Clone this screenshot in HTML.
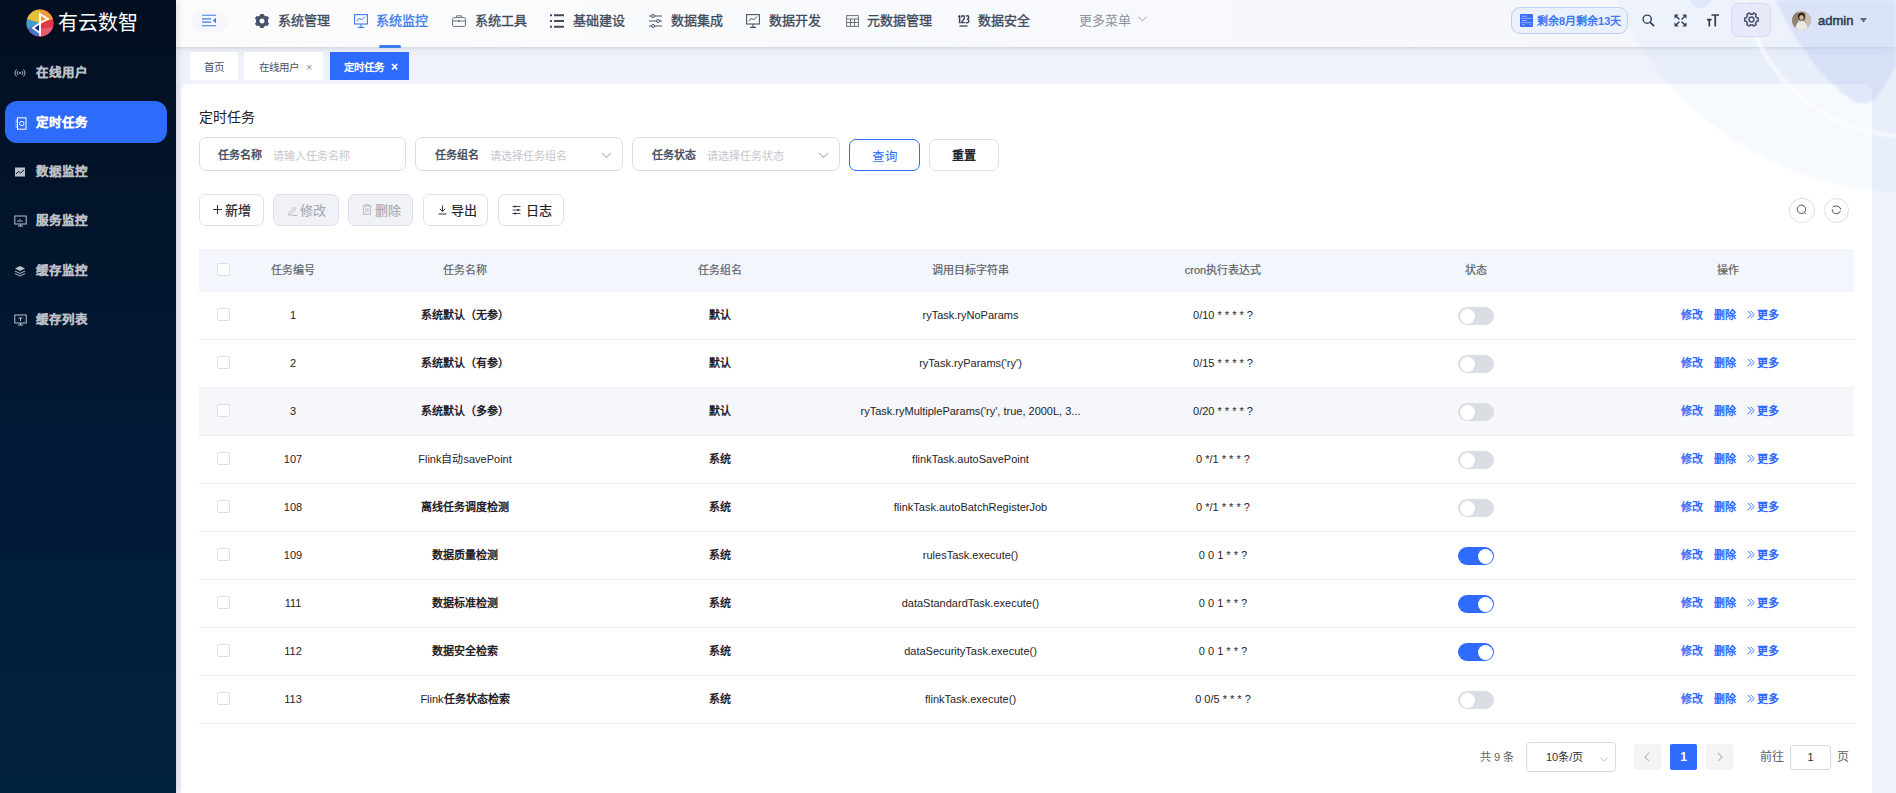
<!DOCTYPE html>
<html lang="zh-CN">
<head>
<meta charset="utf-8">
<style>
*{box-sizing:border-box;margin:0;padding:0}
html,body{width:1896px;height:793px;overflow:hidden}
body{font-family:"Liberation Sans",sans-serif;background:#eff2fa;position:relative;color:#303133}
.a{position:absolute;white-space:nowrap}
svg{display:block}
/* sidebar */
#side{position:absolute;left:0;top:0;width:176px;height:793px;z-index:5;box-shadow:2px 0 6px rgba(0,21,41,.12);background:linear-gradient(180deg,#020f22 0%,#021a35 55%,#02213f 100%)}
#logo{position:absolute;left:0;top:0;width:176px;height:47px;background:#020f20}
.mi{position:absolute;left:0;width:176px;height:42px;font-size:12.5px;font-weight:bold;color:#bcc0c7}
.mi .t{position:absolute;left:36px;top:13px;line-height:18px;-webkit-text-stroke:0.2px currentColor}
.mi .ic{position:absolute;left:14px;top:16px}
.mi.act{left:5px;width:162px;background:#2d6bfb;border-radius:12px;color:#fff}
.mi.act .t{left:31px}
.mi.act .ic{left:10px}
/* header */
#hdr{position:absolute;left:176px;top:0;width:1720px;height:47px;background:linear-gradient(90deg,#fcfcfd 0%,#f8f9fc 50%,#f3f6fb 100%);box-shadow:0 1px 2px rgba(0,20,60,.08),0 3px 9px rgba(0,20,60,.07)}
.nav{position:absolute;top:0;height:47px;font-size:13px;font-weight:bold;color:#3f4a5c}
.nav .t{position:absolute;top:12px;line-height:18px}
.nv{top:12px;font-size:13px;line-height:18px;color:#3f4a5c;-webkit-text-stroke:0.35px currentColor}
.nm{font-weight:bold}
/* tags */
.tag{position:absolute;top:52px;height:28px;background:#fff;font-size:10.5px;color:#4a5160;line-height:28px;padding-top:1px}
/* card */
#card{position:absolute;left:181px;top:84px;width:1691px;height:760px;background:#fff;border-radius:8px}
.inp{position:absolute;top:137px;height:34px;border:1px solid #d9dde9;border-radius:7px;background:#fff}
.inp .l{position:absolute;top:9px;font-size:11px;font-weight:bold;color:#4b5264;line-height:16px}
.inp .p{position:absolute;top:10px;font-size:11px;color:#c3c6cd;line-height:16px}
.btn{position:absolute;height:32px;border:1px solid #dde0ea;border-radius:7px;background:#fff;font-size:12px;color:#1f2329;text-align:center;line-height:30px}
.dis{background:#f0f2f7;color:#a9acb3}
.bt{top:202px;font-size:13px;line-height:18px;color:#1f2329;-webkit-text-stroke:0.2px currentColor}
/* table */
.th{position:absolute;top:249px;left:199px;width:1655px;height:43px;background:#f3f6fc}
.row{position:absolute;left:199px;width:1655px;height:48px;border-bottom:1px solid #eeeff3}
.c{position:absolute;top:0;height:47px;line-height:47px;font-size:11px;color:#1f2329;text-align:center;white-space:nowrap}
.hc{position:absolute;top:0;height:42px;line-height:42px;font-size:11px;color:#5f6368;-webkit-text-stroke:0.2px currentColor;text-align:center;white-space:nowrap}
.cb{position:absolute;width:13px;height:13px;border:1px solid #dcdfe6;border-radius:2px;background:#fff}
.sw{position:absolute;left:1259px;top:15px;width:36px;height:18px;border-radius:9px;background:#dadde4}
.sw::after{content:"";position:absolute;left:1.5px;top:1.5px;width:15px;height:15px;border-radius:50%;background:#fff}
.sw.on{background:#2f6bff}
.sw.on::after{left:19.5px}
.op{position:absolute;top:0;line-height:47px;font-size:11px;font-weight:bold;color:#2f6bff}
</style>
</head>
<body>
<!-- SIDEBAR -->
<div id="side">
  <div id="logo">
    <svg class="a" style="left:26px;top:9px" width="28" height="28" viewBox="0 0 28 28">
      <defs><clipPath id="lc"><circle cx="14" cy="14" r="13.5"/></clipPath></defs>
      <g clip-path="url(#lc)">
        <rect x="0" y="0" width="28" height="28" fill="#e23b45"/>
        <polygon points="0,0 14,0 14,14 0,10" fill="#e3c23a"/>
        <polygon points="14,0 28,0 28,10 14,14" fill="#f09a3a"/>
        <polygon points="0,10 14,14 0,20" fill="#3c9fd0"/>
        <polygon points="0,20 14,14 14,28 0,28" fill="#4a72c8"/>
        <polygon points="14,14 28,10 28,28 14,28" fill="#e0384a"/>
        <polygon points="14,20 28,18 28,28 14,28" fill="#e85a70"/>
      </g>
      <polygon points="14,5 22,10 14,14" fill="none" stroke="#fff" stroke-width="1.8"/>
      <polygon points="14,14 7,19 14,24" fill="#1a2a8a" stroke="#fff" stroke-width="1.8"/>
      <line x1="14" y1="4" x2="14" y2="27" stroke="#fff" stroke-width="1.6"/>
    </svg>
    <div class="a" style="left:58px;top:9px;font-size:20px;line-height:28px;color:#fff;font-weight:300;letter-spacing:0px">有云数智</div>
  </div>
  <div class="mi" style="top:51px">
    <svg class="ic" width="12" height="12" viewBox="0 0 12 12"><path d="M2.5 2.5a5 5 0 0 0 0 7M9.5 2.5a5 5 0 0 1 0 7M4 4a3 3 0 0 0 0 4M8 4a3 3 0 0 1 0 4" fill="none" stroke="#bcc0c7" stroke-width="0.9"/><circle cx="6" cy="6" r="1" fill="#bcc0c7"/></svg>
    <span class="t">在线用户</span></div>
  <div class="mi act" style="top:101px">
    <svg class="ic" width="12" height="13" viewBox="0 0 12 13"><rect x="2.5" y="0.8" width="8.5" height="11.4" fill="none" stroke="#fff" stroke-width="1"/><circle cx="6.8" cy="6.5" r="2.2" fill="none" stroke="#fff" stroke-width="1"/><path d="M0.5 3h2M0.5 5h2M0.5 8h2M0.5 10h2" stroke="#fff" stroke-width="0.8"/></svg>
    <span class="t">定时任务</span></div>
  <div class="mi" style="top:150px">
    <svg class="ic" width="12" height="12" viewBox="0 0 12 12"><rect x="1" y="1.5" width="10" height="9" fill="#bcc0c7"/><path d="M2 8l2.5-2.5 2 1.5L10 4" fill="none" stroke="#031428" stroke-width="1"/></svg>
    <span class="t">数据监控</span></div>
  <div class="mi" style="top:199px">
    <svg class="ic" width="13" height="12" viewBox="0 0 13 12"><rect x="0.8" y="1" width="11.4" height="8" fill="none" stroke="#bcc0c7" stroke-width="1"/><path d="M4 11h5M6.5 9v2M4 7V5M6 7V4M8 7V5.5" stroke="#bcc0c7" stroke-width="1"/></svg>
    <span class="t">服务监控</span></div>
  <div class="mi" style="top:249px">
    <svg class="ic" width="12" height="12" viewBox="0 0 12 12"><path d="M6 1L11 3.5 6 6 1 3.5z" fill="#bcc0c7"/><path d="M1 6l5 2.5L11 6M1 8.5l5 2.5 5-2.5" fill="none" stroke="#bcc0c7" stroke-width="1"/></svg>
    <span class="t">缓存监控</span></div>
  <div class="mi" style="top:298px">
    <svg class="ic" width="13" height="12" viewBox="0 0 13 12"><rect x="0.8" y="1" width="11.4" height="8" fill="none" stroke="#bcc0c7" stroke-width="1"/><path d="M4 11h5M6.5 9v2M4.5 4h4M6.5 4v3" stroke="#bcc0c7" stroke-width="1"/></svg>
    <span class="t">缓存列表</span></div>
</div>

<!-- HEADER -->
<div id="hdr"></div>
<svg id="deco" class="a" style="left:0;top:0;z-index:4" width="1896" height="793" viewBox="0 0 1896 793">
  <defs><filter id="bl" x="-10%" y="-10%" width="120%" height="120%"><feGaussianBlur stdDeviation="1.2"/></filter></defs>
  <circle cx="1908" cy="-126" r="318" fill="rgba(200,215,248,.16)" filter="url(#bl)"/>
  <path d="M1738 65 C1760 80 1785 100 1800 108 L1896 160 L1896 0 L1738 0Z" fill="rgba(190,205,245,.0)"/>
  <path d="M1776 0 C1792 38 1822 80 1852 100 Q1866 108 1876 98 C1884 88 1892 74 1896 64 L1896 0Z" fill="rgba(165,185,240,.26)" filter="url(#bl)"/>
  <circle cx="1908" cy="-30" r="166" fill="none" stroke="rgba(255,255,255,.6)" stroke-width="4" filter="url(#bl)"/>
  <circle cx="1701" cy="-3" r="11" fill="rgba(190,210,245,.30)"/>
</svg>
<!-- hamburger -->
<div class="a" style="left:191px;top:10px;width:37px;height:22px;border-radius:11px;background:#f6f7fb"></div>
<svg class="a" style="left:202px;top:14px" width="14" height="13" viewBox="0 0 14 13"><path d="M0 1.2h14M0 11.8h14M0 4.9h9M0 8.1h9" stroke="#3b7cf0" stroke-width="1.1"/><path d="M14 3.8L10.8 6.5 14 9.2z" fill="#3b7cf0"/></svg>
<!-- gear -->
<svg class="a" style="left:255px;top:14px" width="14" height="14" viewBox="0 0 14 14"><path d="M4.20 2.15 L5.46 1.62 L5.78 0.11 L8.22 0.11 L8.54 1.62 L9.80 2.15 L10.89 2.97 L12.36 2.50 L13.58 4.61 L12.43 5.65 L12.60 7.00 L12.43 8.35 L13.58 9.39 L12.36 11.50 L10.89 11.03 L9.80 11.85 L8.54 12.38 L8.22 13.89 L5.78 13.89 L5.46 12.38 L4.20 11.85 L3.11 11.03 L1.64 11.50 L0.42 9.39 L1.57 8.35 L1.40 7.00 L1.57 5.65 L0.42 4.61 L1.64 2.50 L3.11 2.97Z" fill="#46536a" stroke="#46536a" stroke-width="1" stroke-linejoin="round"/><circle cx="7" cy="7" r="2.5" fill="#fbfbfd"/></svg>
<span class="a nv" style="left:278px">系统管理</span>
<!-- monitor active -->
<svg class="a" style="left:354px;top:14px" width="14" height="14" viewBox="0 0 14 14"><rect x="0.6" y="0.6" width="12.8" height="9.4" fill="none" stroke="#3b7cf0" stroke-width="1.1"/><path d="M3 7l2.5-3 2 2L11 2.5" fill="none" stroke="#3b7cf0" stroke-width="1"/><path d="M7 10v3M4 13.4h6" stroke="#3b7cf0" stroke-width="1.1"/></svg>
<span class="a nv" style="left:376px;color:#3b7cf0">系统监控</span>
<div class="a" style="left:379px;top:45px;width:22px;height:2.5px;border-radius:2px;background:#3b7cf0"></div>
<!-- briefcase -->
<svg class="a" style="left:452px;top:15px" width="14" height="12" viewBox="0 0 14 12"><rect x="0.6" y="2.6" width="12.8" height="8.8" rx="1" fill="none" stroke="#6b7484" stroke-width="1"/><path d="M4.5 2.6V0.8h5v1.8M0.6 6h12.8" fill="none" stroke="#6b7484" stroke-width="1"/><rect x="6" y="5.2" width="2" height="1.8" fill="#6b7484"/></svg>
<span class="a nv" style="left:475px">系统工具</span>
<!-- list -->
<svg class="a" style="left:550px;top:14px" width="14" height="14" viewBox="0 0 14 14"><path d="M0 1.2h2M0 7h2M0 12.8h2M4 1.2h10M4 7h10M4 12.8h10" stroke="#3f4a5c" stroke-width="2"/></svg>
<span class="a nv" style="left:573px">基础建设</span>
<!-- sliders -->
<svg class="a" style="left:649px;top:14px" width="13" height="14" viewBox="0 0 13 14"><path d="M0 2h13M0 7h13M0 12h13" stroke="#46536a" stroke-width="1"/><circle cx="4" cy="2" r="1.5" fill="#f8f9fc" stroke="#46536a" stroke-width="1"/><circle cx="9" cy="7" r="1.5" fill="#f8f9fc" stroke="#46536a" stroke-width="1"/><circle cx="4" cy="12" r="1.5" fill="#f8f9fc" stroke="#46536a" stroke-width="1"/></svg>
<span class="a nv" style="left:671px">数据集成</span>
<!-- monitor 2 -->
<svg class="a" style="left:746px;top:14px" width="14" height="14" viewBox="0 0 14 14"><rect x="0.6" y="0.6" width="12.8" height="9.4" fill="none" stroke="#46536a" stroke-width="1.1"/><path d="M3 7l2.5-3 2 2L11 2.5" fill="none" stroke="#46536a" stroke-width="1"/><path d="M7 10v3M4 13.4h6" stroke="#46536a" stroke-width="1.1"/></svg>
<span class="a nv" style="left:769px">数据开发</span>
<!-- table -->
<svg class="a" style="left:846px;top:15px" width="13" height="12" viewBox="0 0 13 12"><rect x="0.6" y="0.6" width="11.8" height="10.8" fill="none" stroke="#6b7484" stroke-width="1"/><path d="M0.6 4h11.8M0.6 7.5h11.8M4.5 4v7.4M8.5 4v7.4" stroke="#6b7484" stroke-width="1"/></svg>
<span class="a nv" style="left:867px">元数据管理</span>
<!-- 123 -->
<svg class="a" style="left:957px;top:15px" width="13" height="13" viewBox="0 0 13 13"><path d="M1.2 1.8L2.6 0.9V8.2" fill="none" stroke="#3a4558" stroke-width="1.5"/><path d="M4.3 2.3Q4.6 0.8 6 0.8Q7.5 0.8 7.5 2.4Q7.5 3.6 4.3 7.6H7.8" fill="none" stroke="#3a4558" stroke-width="1.4"/><path d="M8.8 1.2Q9.4 0.8 10.4 0.8Q11.8 0.8 11.8 2.3Q11.8 4 10 4.2Q11.9 4.4 11.9 6.1Q11.9 7.8 10.2 7.8Q9.2 7.8 8.7 7.2" fill="none" stroke="#3a4558" stroke-width="1.4"/><path d="M2.5 11h8" stroke="#3a4558" stroke-width="1.3"/></svg>
<span class="a nv" style="left:978px">数据安全</span>
<span class="a nv" style="left:1079px;color:#8e9299;-webkit-text-stroke:0">更多菜单</span>
<svg class="a" style="left:1138px;top:16px" width="9" height="6" viewBox="0 0 9 6"><path d="M0.5 0.8l4 4 4-4" fill="none" stroke="#9aa0a8" stroke-width="1"/></svg>

<div class="a" style="left:0;top:0;width:0;height:0;z-index:6">
<!-- right header -->
<div class="a" style="left:1511px;top:7px;width:117px;height:27px;border:1px solid #b8d0fa;border-radius:9px;background:#eaf1fd"></div>
<svg class="a" style="left:1520px;top:14px" width="13" height="13" viewBox="0 0 13 13"><rect x="0" y="0" width="13" height="13" rx="1" fill="#3b6cf5"/><path d="M1 4.3h11M1 8.6h11" stroke="#9db8fb" stroke-width="0.8"/><path d="M2 2.2h5M2 6.5h5M2 10.8h3M9.5 10.8h2" stroke="#b8ccfc" stroke-width="0.8"/></svg>
<span class="a" style="left:1537px;top:12px;font-size:11px;line-height:18px;font-weight:bold;color:#3b78f2">剩余8月剩余13天</span>
<svg class="a" style="left:1642px;top:14px" width="13" height="13" viewBox="0 0 13 13"><circle cx="5.2" cy="5.2" r="4.1" fill="none" stroke="#34405a" stroke-width="1.4"/><path d="M8.3 8.3l3.3 3.3" stroke="#34405a" stroke-width="1.7" stroke-linecap="round"/></svg>
<svg class="a" style="left:1674px;top:14px" width="13" height="13" viewBox="0 0 13 13"><path d="M0.5 0.5h4.2L0.5 4.7zM12.5 0.5v4.2L8.3 0.5zM12.5 12.5h-4.2l4.2-4.2zM0.5 12.5V8.3l4.2 4.2z" fill="#34405a"/><path d="M2 2l3 3M11 2L8 5M11 11L8 8M2 11l3-3" stroke="#34405a" stroke-width="1.5" stroke-linecap="round"/></svg>
<svg class="a" style="left:1707px;top:14px" width="12" height="13" viewBox="0 0 12 13"><path d="M0 5.6h4.6M2.3 5.6V12.5M4.5 1h7.5M8.25 1v11.5" fill="none" stroke="#2f3a4d" stroke-width="1.7"/></svg>
<div class="a" style="left:1731px;top:3px;width:40px;height:34px;border:1px solid #d9d5f6;border-radius:7px;background:rgba(226,226,250,.55)"></div>
<svg class="a" style="left:1744px;top:11.5px" width="15" height="15" viewBox="0 0 15 15"><path d="M7.50 2.10 L8.62 2.22 L9.66 0.84 L12.18 2.30 L11.51 3.89 L12.18 4.80 L12.64 5.83 L14.35 6.04 L14.35 8.96 L12.64 9.17 L12.18 10.20 L11.51 11.11 L12.18 12.70 L9.66 14.16 L8.62 12.78 L7.50 12.90 L6.38 12.78 L5.34 14.16 L2.82 12.70 L3.49 11.11 L2.82 10.20 L2.36 9.17 L0.65 8.96 L0.65 6.04 L2.36 5.83 L2.82 4.80 L3.49 3.89 L2.82 2.30 L5.34 0.84 L6.38 2.22Z" fill="none" stroke="#46536a" stroke-width="1.5" stroke-linejoin="round"/><circle cx="7.5" cy="7.5" r="2.4" fill="none" stroke="#46536a" stroke-width="1.5"/></svg>
<svg class="a" style="left:1792px;top:10.5px" width="19" height="19" viewBox="0 0 19 19"><defs><clipPath id="av"><circle cx="9.5" cy="9.5" r="9.5"/></clipPath></defs><g clip-path="url(#av)"><rect width="19" height="19" fill="#b8ab98"/><rect x="0" y="0" width="6" height="19" fill="#8f8270"/><rect x="14" y="0" width="5" height="19" fill="#c9bfb0"/><ellipse cx="9.5" cy="5.5" rx="3.6" ry="4" fill="#2f2520"/><ellipse cx="9.5" cy="6.5" rx="2.2" ry="2.6" fill="#d9b89a"/><path d="M3 19 Q4 10 9.5 10 Q15 10 16 19z" fill="#eeeae2"/></g></svg>
<span class="a" style="left:1818px;top:12px;font-size:13px;line-height:18px;color:#2d3a4f;-webkit-text-stroke:0.5px #2d3a4f">admin</span>
<svg class="a" style="left:1860px;top:18px" width="7" height="5" viewBox="0 0 7 5"><path d="M0 0h7L3.5 4.5z" fill="#5b6a82"/></svg>


</div>
<!-- TAGS -->
<div class="tag" style="left:190px;width:48px;text-align:center">首页</div>
<div class="tag" style="left:244px;width:79px"><span class="a" style="left:15px">在线用户</span><span class="a" style="left:62px;font-size:11px;color:#8a8f99">×</span></div>
<div class="tag" style="left:330px;width:79px;background:#2e6bfd;color:#fff;font-weight:bold"><span class="a" style="left:14px">定时任务</span><span class="a" style="left:61px;font-size:12px">×</span></div>

<!-- CARD -->
<div id="card"></div>
<div class="a" style="left:199px;top:108px;font-size:14px;line-height:18px;color:#1f2329">定时任务</div>

<div class="inp" style="left:199px;width:207px"><span class="l" style="left:18px">任务名称</span><span class="p" style="left:73px">请输入任务名称</span></div>
<div class="inp" style="left:415px;width:208px"><span class="l" style="left:19px">任务组名</span><span class="p" style="left:74px">请选择任务组名</span>
  <svg class="a" style="left:185px;top:14px" width="11" height="7" viewBox="0 0 11 7"><path d="M1 1l4.5 4.5L10 1" fill="none" stroke="#b8bcc4" stroke-width="1.1"/></svg></div>
<div class="inp" style="left:632px;width:208px"><span class="l" style="left:19px">任务状态</span><span class="p" style="left:74px">请选择任务状态</span>
  <svg class="a" style="left:185px;top:14px" width="11" height="7" viewBox="0 0 11 7"><path d="M1 1l4.5 4.5L10 1" fill="none" stroke="#b8bcc4" stroke-width="1.1"/></svg></div>
<div class="btn" style="left:849px;top:139px;width:71px;border:1.5px solid #2f6bff;color:#2f6bff;line-height:34px;font-size:12.5px">查询</div>
<div class="btn" style="left:929px;top:139px;width:70px;font-weight:bold;line-height:33px">重置</div>

<div class="btn" style="left:199px;top:194px;width:65px"></div>
<svg class="a" style="left:213px;top:205px" width="9" height="9" viewBox="0 0 9 9"><path d="M4.5 0v9M0 4.5h9" stroke="#303640" stroke-width="1.1"/></svg>
<span class="a bt" style="left:225px">新增</span>
<div class="btn dis" style="left:273px;top:194px;width:66px"></div>
<svg class="a" style="left:287px;top:205px" width="11" height="11" viewBox="0 0 11 11"><path d="M1.5 8.5L7.5 2.2 9 3.7 3 10H1.5z" fill="none" stroke="#b0b3ba" stroke-width="0.9"/><path d="M4.5 10.4h6" stroke="#b0b3ba" stroke-width="0.9"/></svg>
<span class="a bt" style="left:300px;color:#a9acb3">修改</span>
<div class="btn dis" style="left:348px;top:194px;width:65px"></div>
<svg class="a" style="left:362px;top:204px" width="10" height="11" viewBox="0 0 10 11"><path d="M0.5 2h9M3.5 2V0.6h3V2M1.5 2v8.4h7V2M4 4v4.5M6 4v4.5" fill="none" stroke="#b0b3ba" stroke-width="0.9"/></svg>
<span class="a bt" style="left:375px;color:#a9acb3">删除</span>
<div class="btn" style="left:423px;top:194px;width:65px"></div>
<svg class="a" style="left:438px;top:205px" width="9" height="10" viewBox="0 0 9 10"><path d="M4.5 0.5v6M1.8 3.8l2.7 2.7 2.7-2.7M0.5 9h8" fill="none" stroke="#303640" stroke-width="1"/></svg>
<span class="a bt" style="left:451px">导出</span>
<div class="btn" style="left:498px;top:194px;width:66px"></div>
<svg class="a" style="left:512px;top:205px" width="9" height="10" viewBox="0 0 9 10"><path d="M0.5 1.5h8M0.5 5h8M0.5 8.5h8" stroke="#303640" stroke-width="0.9"/><circle cx="3" cy="1.5" r="1.1" fill="#303640"/><circle cx="6" cy="5" r="1.1" fill="#303640"/><circle cx="3" cy="8.5" r="1.1" fill="#303640"/></svg>
<span class="a bt" style="left:526px">日志</span>
<div class="a" style="left:1789px;top:198px;width:26px;height:25px;border:1px solid #dcdfe6;border-radius:50%"></div>
<svg class="a" style="left:1796px;top:204px" width="12" height="12" viewBox="0 0 12 12"><circle cx="5.4" cy="5.3" r="4.2" fill="none" stroke="#3c4250" stroke-width="0.9"/><path d="M8.4 8.4l1.4 1.4" stroke="#3c4250" stroke-width="0.9"/></svg>
<div class="a" style="left:1824px;top:198px;width:25px;height:25px;border:1px solid #dcdfe6;border-radius:50%"></div>
<svg class="a" style="left:1831px;top:205px" width="11" height="10" viewBox="0 0 11 10"><path d="M1.5 2.2Q2.5 1 5.3 1Q8.5 1 9.3 3.4" fill="none" stroke="#3c4250" stroke-width="0.9"/><path d="M1.2 4.2Q1.2 8.7 5.3 8.7Q8.5 8.7 9.4 6" fill="none" stroke="#3c4250" stroke-width="0.9"/><path d="M8.6 4.2L10 2.6 9.9 4.6z" fill="#3c4250"/></svg>

<!-- TABLE -->
<div class="th">
<div class="cb" style="left:18px;top:14px"></div>
<div class="hc" style="left:-6.0px;width:200px;">任务编号</div>
<div class="hc" style="left:166.0px;width:200px;">任务名称</div>
<div class="hc" style="left:420.5px;width:200px;">任务组名</div>
<div class="hc" style="left:671.5px;width:200px;">调用目标字符串</div>
<div class="hc" style="left:924.0px;width:200px;">cron执行表达式</div>
<div class="hc" style="left:1176.5px;width:200px;">状态</div>
<div class="hc" style="left:1428.5px;width:200px;">操作</div>
</div>
<div class="row" style="top:292px;">
<div class="cb" style="left:18px;top:16px"></div>
<div class="c" style="left:44.0px;width:100px;">1</div>
<div class="c nm" style="left:146.0px;width:240px;">系统默认（无参）</div>
<div class="c nm" style="left:470.5px;width:100px;">默认</div>
<div class="c tg" style="left:621.5px;width:300px;">ryTask.ryNoParams</div>
<div class="c tg" style="left:924.0px;width:200px;">0/10 * * * * ?</div>
<div class="sw"></div>
<span class="op" style="left:1482px">修改</span><span class="op" style="left:1515px">删除</span><svg class="a" style="left:1548px;top:18px" width="8" height="9" viewBox="0 0 8 9"><path d="M0.8 0.8L4 4.5 0.8 8.2M3.8 0.8L7 4.5 3.8 8.2" fill="none" stroke="#2f6bff" stroke-width="0.9"/></svg><span class="op" style="left:1558px">更多</span>
</div>
<div class="row" style="top:340px;">
<div class="cb" style="left:18px;top:16px"></div>
<div class="c" style="left:44.0px;width:100px;">2</div>
<div class="c nm" style="left:146.0px;width:240px;">系统默认（有参）</div>
<div class="c nm" style="left:470.5px;width:100px;">默认</div>
<div class="c tg" style="left:621.5px;width:300px;">ryTask.ryParams('ry')</div>
<div class="c tg" style="left:924.0px;width:200px;">0/15 * * * * ?</div>
<div class="sw"></div>
<span class="op" style="left:1482px">修改</span><span class="op" style="left:1515px">删除</span><svg class="a" style="left:1548px;top:18px" width="8" height="9" viewBox="0 0 8 9"><path d="M0.8 0.8L4 4.5 0.8 8.2M3.8 0.8L7 4.5 3.8 8.2" fill="none" stroke="#2f6bff" stroke-width="0.9"/></svg><span class="op" style="left:1558px">更多</span>
</div>
<div class="row" style="top:388px;background:#f5f7fa;">
<div class="cb" style="left:18px;top:16px"></div>
<div class="c" style="left:44.0px;width:100px;">3</div>
<div class="c nm" style="left:146.0px;width:240px;">系统默认（多参）</div>
<div class="c nm" style="left:470.5px;width:100px;">默认</div>
<div class="c tg" style="left:621.5px;width:300px;">ryTask.ryMultipleParams('ry', true, 2000L, 3...</div>
<div class="c tg" style="left:924.0px;width:200px;">0/20 * * * * ?</div>
<div class="sw"></div>
<span class="op" style="left:1482px">修改</span><span class="op" style="left:1515px">删除</span><svg class="a" style="left:1548px;top:18px" width="8" height="9" viewBox="0 0 8 9"><path d="M0.8 0.8L4 4.5 0.8 8.2M3.8 0.8L7 4.5 3.8 8.2" fill="none" stroke="#2f6bff" stroke-width="0.9"/></svg><span class="op" style="left:1558px">更多</span>
</div>
<div class="row" style="top:436px;">
<div class="cb" style="left:18px;top:16px"></div>
<div class="c" style="left:44.0px;width:100px;">107</div>
<div class="c" style="left:146.0px;width:240px;">Flink自动savePoint</div>
<div class="c nm" style="left:470.5px;width:100px;">系统</div>
<div class="c tg" style="left:621.5px;width:300px;">flinkTask.autoSavePoint</div>
<div class="c tg" style="left:924.0px;width:200px;">0 */1 * * * ?</div>
<div class="sw"></div>
<span class="op" style="left:1482px">修改</span><span class="op" style="left:1515px">删除</span><svg class="a" style="left:1548px;top:18px" width="8" height="9" viewBox="0 0 8 9"><path d="M0.8 0.8L4 4.5 0.8 8.2M3.8 0.8L7 4.5 3.8 8.2" fill="none" stroke="#2f6bff" stroke-width="0.9"/></svg><span class="op" style="left:1558px">更多</span>
</div>
<div class="row" style="top:484px;">
<div class="cb" style="left:18px;top:16px"></div>
<div class="c" style="left:44.0px;width:100px;">108</div>
<div class="c nm" style="left:146.0px;width:240px;">离线任务调度检测</div>
<div class="c nm" style="left:470.5px;width:100px;">系统</div>
<div class="c tg" style="left:621.5px;width:300px;">flinkTask.autoBatchRegisterJob</div>
<div class="c tg" style="left:924.0px;width:200px;">0 */1 * * * ?</div>
<div class="sw"></div>
<span class="op" style="left:1482px">修改</span><span class="op" style="left:1515px">删除</span><svg class="a" style="left:1548px;top:18px" width="8" height="9" viewBox="0 0 8 9"><path d="M0.8 0.8L4 4.5 0.8 8.2M3.8 0.8L7 4.5 3.8 8.2" fill="none" stroke="#2f6bff" stroke-width="0.9"/></svg><span class="op" style="left:1558px">更多</span>
</div>
<div class="row" style="top:532px;">
<div class="cb" style="left:18px;top:16px"></div>
<div class="c" style="left:44.0px;width:100px;">109</div>
<div class="c nm" style="left:146.0px;width:240px;">数据质量检测</div>
<div class="c nm" style="left:470.5px;width:100px;">系统</div>
<div class="c tg" style="left:621.5px;width:300px;">rulesTask.execute()</div>
<div class="c tg" style="left:924.0px;width:200px;">0 0 1 * * ?</div>
<div class="sw on"></div>
<span class="op" style="left:1482px">修改</span><span class="op" style="left:1515px">删除</span><svg class="a" style="left:1548px;top:18px" width="8" height="9" viewBox="0 0 8 9"><path d="M0.8 0.8L4 4.5 0.8 8.2M3.8 0.8L7 4.5 3.8 8.2" fill="none" stroke="#2f6bff" stroke-width="0.9"/></svg><span class="op" style="left:1558px">更多</span>
</div>
<div class="row" style="top:580px;">
<div class="cb" style="left:18px;top:16px"></div>
<div class="c" style="left:44.0px;width:100px;">111</div>
<div class="c nm" style="left:146.0px;width:240px;">数据标准检测</div>
<div class="c nm" style="left:470.5px;width:100px;">系统</div>
<div class="c tg" style="left:621.5px;width:300px;">dataStandardTask.execute()</div>
<div class="c tg" style="left:924.0px;width:200px;">0 0 1 * * ?</div>
<div class="sw on"></div>
<span class="op" style="left:1482px">修改</span><span class="op" style="left:1515px">删除</span><svg class="a" style="left:1548px;top:18px" width="8" height="9" viewBox="0 0 8 9"><path d="M0.8 0.8L4 4.5 0.8 8.2M3.8 0.8L7 4.5 3.8 8.2" fill="none" stroke="#2f6bff" stroke-width="0.9"/></svg><span class="op" style="left:1558px">更多</span>
</div>
<div class="row" style="top:628px;">
<div class="cb" style="left:18px;top:16px"></div>
<div class="c" style="left:44.0px;width:100px;">112</div>
<div class="c nm" style="left:146.0px;width:240px;">数据安全检索</div>
<div class="c nm" style="left:470.5px;width:100px;">系统</div>
<div class="c tg" style="left:621.5px;width:300px;">dataSecurityTask.execute()</div>
<div class="c tg" style="left:924.0px;width:200px;">0 0 1 * * ?</div>
<div class="sw on"></div>
<span class="op" style="left:1482px">修改</span><span class="op" style="left:1515px">删除</span><svg class="a" style="left:1548px;top:18px" width="8" height="9" viewBox="0 0 8 9"><path d="M0.8 0.8L4 4.5 0.8 8.2M3.8 0.8L7 4.5 3.8 8.2" fill="none" stroke="#2f6bff" stroke-width="0.9"/></svg><span class="op" style="left:1558px">更多</span>
</div>
<div class="row" style="top:676px;">
<div class="cb" style="left:18px;top:16px"></div>
<div class="c" style="left:44.0px;width:100px;">113</div>
<div class="c" style="left:146.0px;width:240px;">Flink<b>任务状态检索</b></div>
<div class="c nm" style="left:470.5px;width:100px;">系统</div>
<div class="c tg" style="left:621.5px;width:300px;">flinkTask.execute()</div>
<div class="c tg" style="left:924.0px;width:200px;">0 0/5 * * * ?</div>
<div class="sw"></div>
<span class="op" style="left:1482px">修改</span><span class="op" style="left:1515px">删除</span><svg class="a" style="left:1548px;top:18px" width="8" height="9" viewBox="0 0 8 9"><path d="M0.8 0.8L4 4.5 0.8 8.2M3.8 0.8L7 4.5 3.8 8.2" fill="none" stroke="#2f6bff" stroke-width="0.9"/></svg><span class="op" style="left:1558px">更多</span>
</div>

<!-- PAGINATION -->
<div class="a" style="left:1480px;top:749px;font-size:11px;line-height:16px;color:#606266">共 9 条</div>
<div class="a" style="left:1526px;top:742px;width:90px;height:30px;border:1px solid #d4dae6;border-radius:4px;font-size:11px;color:#303133;line-height:28px;padding-left:19px">10条/页</div>
<svg class="a" style="left:1600px;top:757px" width="8" height="5" viewBox="0 0 8 5"><path d="M0.5 0.5l3.5 3.8 3.5-3.8" fill="none" stroke="#b4b8c0" stroke-width="0.9"/></svg>
<div class="a" style="left:1634px;top:744px;width:27px;height:26px;background:#f4f4f5;border-radius:2px"></div>
<svg class="a" style="left:1644px;top:752px" width="6" height="10" viewBox="0 0 6 10"><path d="M5 0.8L1 5l4 4.2" fill="none" stroke="#b4b8c0" stroke-width="1.1"/></svg>
<div class="a" style="left:1670px;top:744px;width:27px;height:26px;background:#2f6bff;border-radius:2px;color:#fff;font-size:12px;font-weight:bold;text-align:center;line-height:26px">1</div>
<div class="a" style="left:1706px;top:744px;width:27px;height:26px;background:#f4f4f5;border-radius:2px"></div>
<svg class="a" style="left:1717px;top:752px" width="6" height="10" viewBox="0 0 6 10"><path d="M1 0.8L5 5 1 9.2" fill="none" stroke="#b4b8c0" stroke-width="1.1"/></svg>
<div class="a" style="left:1760px;top:748px;font-size:12px;line-height:18px;color:#606266">前往</div>
<div class="a" style="left:1790px;top:745px;width:41px;height:25px;border:1px solid #d4dae6;border-radius:3px;font-size:11px;color:#303133;text-align:center;line-height:23px">1</div>
<div class="a" style="left:1837px;top:748px;font-size:12px;line-height:18px;color:#606266">页</div>
</body>
</html>
